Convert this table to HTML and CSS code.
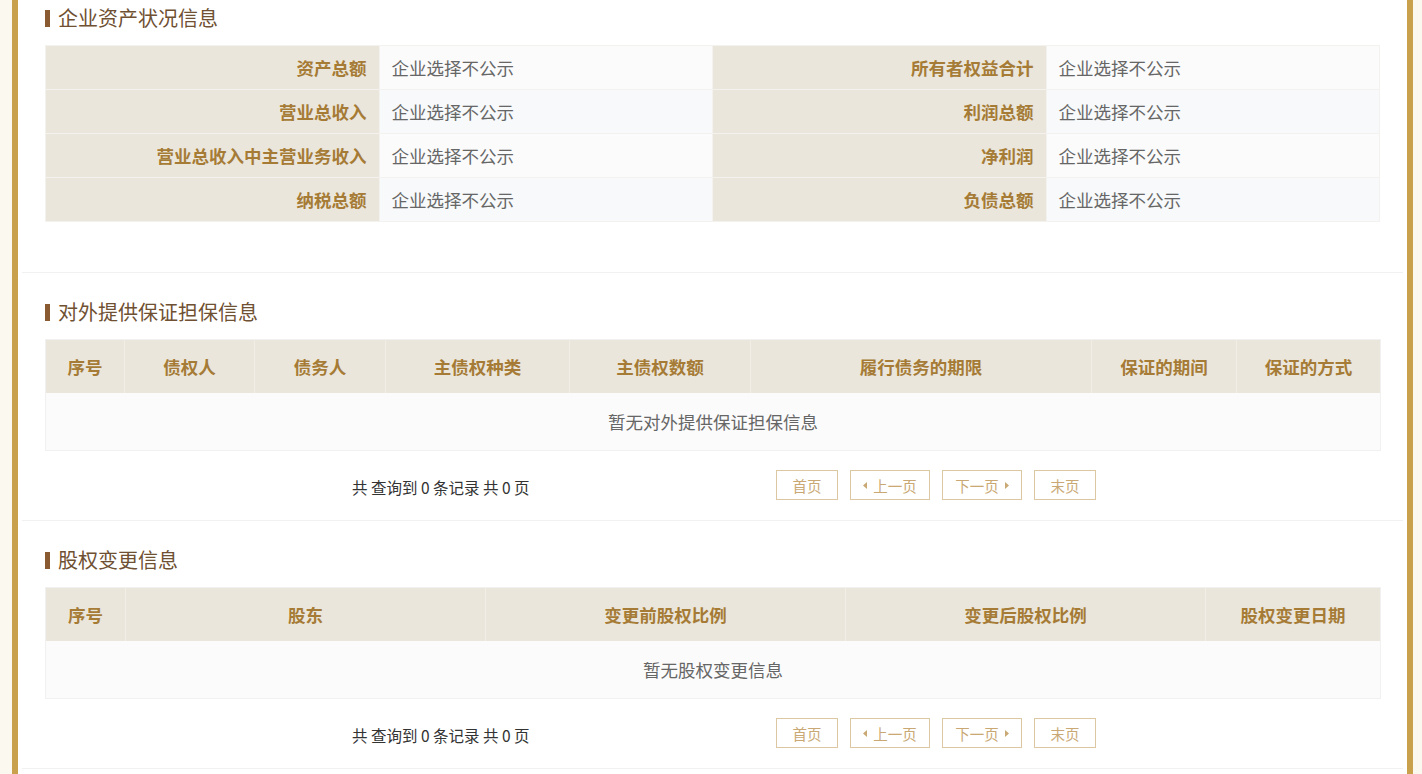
FILE: index.html
```html
<!DOCTYPE html>
<html>
<head>
    <title>企业年报信息</title>
    <link rel="stylesheet" href="styles.css">
</head>
<body>
    <div class="page">
        <div class="section section-first">
            <h2 class="section-title">企业资产状况信息</h2>
            <table class="info-table">
                <tr>
                    <th>资产总额</th><td>企业选择不公示</td>
                    <th>所有者权益合计</th><td>企业选择不公示</td>
                </tr>
                <tr class="alt">
                    <th>营业总收入</th><td>企业选择不公示</td>
                    <th>利润总额</th><td>企业选择不公示</td>
                </tr>
                <tr>
                    <th>营业总收入中主营业务收入</th><td>企业选择不公示</td>
                    <th>净利润</th><td>企业选择不公示</td>
                </tr>
                <tr class="alt">
                    <th>纳税总额</th><td>企业选择不公示</td>
                    <th>负债总额</th><td>企业选择不公示</td>
                </tr>
            </table>
        </div>

        <div class="section">
            <h2 class="section-title">对外提供保证担保信息</h2>
            <table class="list-table">
                <colgroup>
                    <col style="width: 79px"><col style="width: 130px"><col style="width: 131px">
                    <col style="width: 184px"><col style="width: 181px"><col style="width: 341px">
                    <col style="width: 145px"><col style="width: 144px">
                </colgroup>
                <tr>
                    <th>序号</th><th>债权人</th><th>债务人</th><th>主债权种类</th>
                    <th>主债权数额</th><th>履行债务的期限</th><th>保证的期间</th><th>保证的方式</th>
                </tr>
                <tr>
                    <td colspan="8" class="empty">暂无对外提供保证担保信息</td>
                </tr>
            </table>
            <div class="pager">
                <div class="pager-info">共 查询到 0 条记录 共 0 页</div>
                <div class="pager-buttons">
                    <a class="page-btn short">首页</a>
                    <a class="page-btn"><svg width="5" height="7" viewBox="0 0 5 7"><path d="M4 0L0 3.5L4 7Z" fill="#c9a873"/></svg>上一页</a>
                    <a class="page-btn">下一页<svg width="5" height="7" viewBox="0 0 5 7"><path d="M1 0L5 3.5L1 7Z" fill="#c9a873"/></svg></a>
                    <a class="page-btn short">末页</a>
                </div>
            </div>
        </div>

        <div class="section">
            <h2 class="section-title">股权变更信息</h2>
            <table class="list-table">
                <colgroup>
                    <col style="width: 80px"><col style="width: 360px"><col style="width: 360px">
                    <col style="width: 360px"><col style="width: 175px">
                </colgroup>
                <tr>
                    <th>序号</th><th>股东</th><th>变更前股权比例</th><th>变更后股权比例</th><th>股权变更日期</th>
                </tr>
                <tr>
                    <td colspan="5" class="empty">暂无股权变更信息</td>
                </tr>
            </table>
            <div class="pager">
                <div class="pager-info">共 查询到 0 条记录 共 0 页</div>
                <div class="pager-buttons">
                    <a class="page-btn short">首页</a>
                    <a class="page-btn"><svg width="5" height="7" viewBox="0 0 5 7"><path d="M4 0L0 3.5L4 7Z" fill="#c9a873"/></svg>上一页</a>
                    <a class="page-btn">下一页<svg width="5" height="7" viewBox="0 0 5 7"><path d="M1 0L5 3.5L1 7Z" fill="#c9a873"/></svg></a>
                    <a class="page-btn short">末页</a>
                </div>
            </div>
        </div>
    </div>
</body>
</html>
```

FILE: styles.css
```css
body {
    margin: 0;
    background-color: #fbf8ef;
    font-family: "Noto Sans CJK SC", "Noto Sans", sans-serif;
}
.page {
    margin: 0 9px 0 12px;
    border-left: 6px solid #c9a04c;
    border-right: 6px solid #c9a04c;
    background-color: #fff;
    padding: 0 4px;
    min-height: 774px;
}
.section {
    padding: 27px 23px 20px 23px;
    border-bottom: 1px solid #f1f1f1;
}
.section-first {
    padding-top: 6px;
    padding-bottom: 50px;
}
.section-title {
    margin: 0 0 15px 0;
    height: 24px;
    line-height: 24px;
    font-size: 20px;
    font-weight: normal;
    color: #6f5032;
    display: flex;
    align-items: center;
}
.section-title::before {
    content: "";
    width: 5px;
    height: 17px;
    background-color: #8a5a32;
    margin-right: 8px;
}
table {
    width: 100%;
    border-collapse: collapse;
    table-layout: fixed;
}
.info-table th,
.info-table td {
    height: 43px;
    padding: 0 12px;
    font-size: 17.5px;
    border: 1px solid #f4f2ee;
}
.info-table th {
    text-align: right;
    background-color: #ebe6dc;
    color: #a57b35;
    font-weight: bold;
}
.info-table td {
    background-color: #fbfbfb;
    color: #666;
}
.info-table tr.alt td {
    background-color: #f7f9fa;
}
.list-table {
    border: 1px solid #f1f1f1;
}
.list-table th {
    height: 53px;
    background-color: #ebe6dc;
    color: #a57b35;
    font-size: 17.5px;
    font-weight: bold;
    border-left: 1px solid #f2eee7;
    padding: 0;
}
.list-table th:first-child {
    border-left: none;
}
.list-table td.empty {
    height: 55px;
    text-align: center;
    background-color: #fbfbfb;
    color: #666;
    font-size: 17.5px;
}
.pager {
    display: flex;
    align-items: center;
    padding-left: 307px;
    margin-top: 19px;
}
.pager-info {
    width: 424px;
    font-size: 15.5px;
    color: #333;
    padding-top: 4px;
}
.pager-buttons {
    display: flex;
    gap: 12px;
}
.page-btn {
    box-sizing: border-box;
    width: 80px;
    height: 30px;
    border: 1px solid #dcc7a2;
    color: #c9a873;
    font-size: 14.5px;
    display: flex;
    align-items: center;
    justify-content: center;
    gap: 5px;
}
.page-btn.short {
    width: 62px;
}
```
